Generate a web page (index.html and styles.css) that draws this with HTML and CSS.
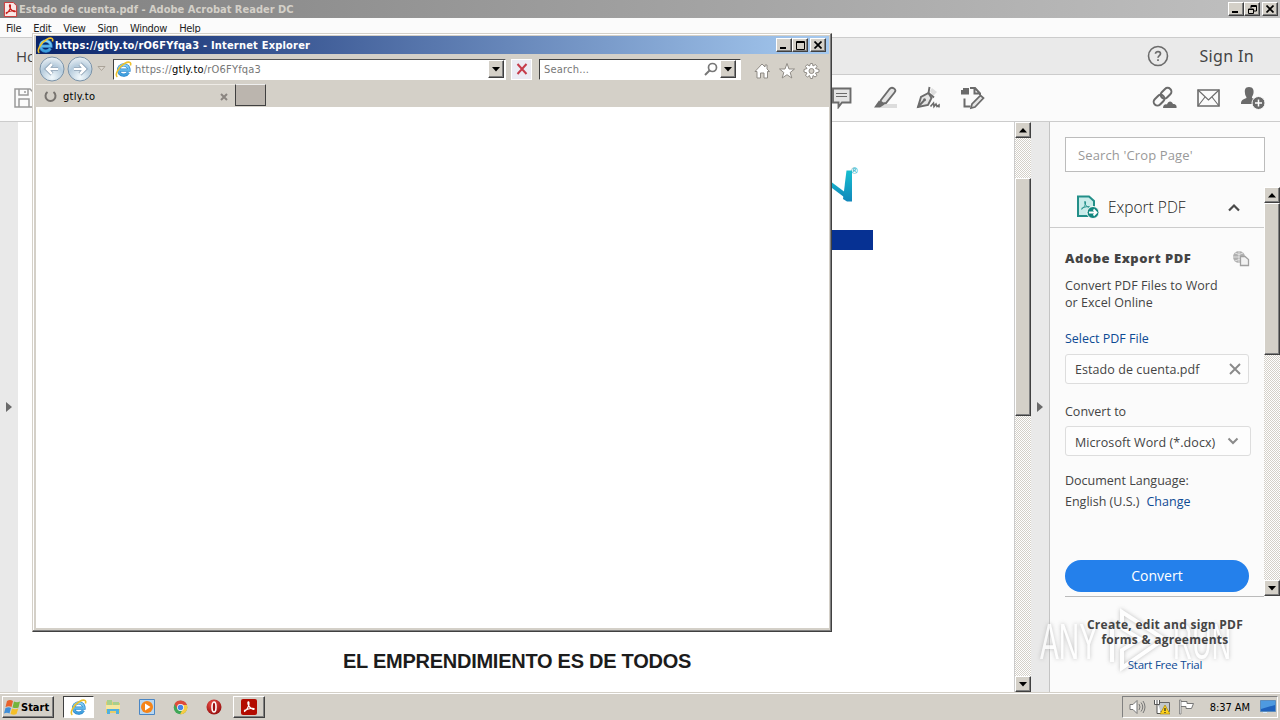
FILE: index.html
```html
<!DOCTYPE html>
<html lang="en">
<head>
<meta charset="utf-8">
<title>Estado de cuenta.pdf - Adobe Acrobat Reader DC</title>
<link rel="stylesheet" href="styles.css">
</head>
<body>
<svg width="0" height="0" class="defs">
  <defs>
    <linearGradient id="ieg" x1="0" y1="0" x2="0" y2="1"><stop offset="0" stop-color="#8ad4f8"/><stop offset="1" stop-color="#3a9cdc"/></linearGradient>
    <linearGradient id="ng" x1="0" y1="0" x2="0" y2="1"><stop offset="0" stop-color="#16bfd0"/><stop offset="1" stop-color="#1287bb"/></linearGradient>
    <radialGradient id="orb" cx=".5" cy=".85" r=".9"><stop offset="0" stop-color="#f2f9fc"/><stop offset=".55" stop-color="#b5cbdc"/><stop offset="1" stop-color="#f5f8fa"/></radialGradient>
    <radialGradient id="red" cx=".4" cy=".3" r=".8"><stop offset="0" stop-color="#f05048"/><stop offset="1" stop-color="#8c0808"/></radialGradient>
  </defs>
  <symbol id="ie" viewBox="0 0 16 16">
    <path d="M12.600 10.800A5 4.800 0 1 1 13.200 8.600H4.200" fill="none" stroke="#2c86cc" stroke-width="3"/>
    <path d="M12.600 10.800A5 4.800 0 1 1 13.200 8.600H4.200" fill="none" stroke="url(#ieg)" stroke-width="1.900"/>
    <path d="M2.200 15C-.6 13 3.500 5.200 9 2.300 12.500.4 15.800.4 14.500 4.200" fill="none" stroke="#ecc02c" stroke-width="1.500"/>
  </symbol>
  <symbol id="pdf" viewBox="0 0 16 16">
    <path d="M3 12.800C4.800 12.200 8.800 7 8 3.600 7.500 2 6.500 3 7 5c.7 3 4.500 6 6 5.200C14 9 10 8.500 3 11.500" fill="none" stroke="currentColor" stroke-width="1.200"/>
  </symbol>
  <symbol id="up" viewBox="0 0 8 5"><path d="M4 0 8 4.500H0z"/></symbol>
  <symbol id="down" viewBox="0 0 8 5"><path d="M0 0H8L4 4.500z"/></symbol>
  <symbol id="close" viewBox="0 0 8 8"><path d="M.5.500 7.500 7.500M7.500.500.500 7.500" stroke="#000" stroke-width="1.700"/></symbol>
</svg>

<div class="app">
  <header class="titlebar">
    <svg class="app-icon" viewBox="0 0 16 16"><path d="M1.500.5H11L14.500 4V15.500H1.500z" fill="#f9e8e6" stroke="#c33"/><g color="#c8201c"><use href="#pdf" width="16" height="16"/></g></svg>
    <span class="titlebar-text">Estado de cuenta.pdf - Adobe Acrobat Reader DC</span>
    <div class="win-buttons">
      <span class="btn3d"><svg width="8" height="8"><path d="M0 7H6" stroke="#000" stroke-width="2"/></svg></span>
      <span class="btn3d"><svg width="9" height="9"><path d="M3 3V.500H8.500V6H6M3 1.500H8.500M.500 4H5.500V8.500H.500zM.500 4.500H5.500" fill="none" stroke="#000"/></svg></span>
      <span class="btn3d gap"><svg width="8" height="8"><use href="#close"/></svg></span>
    </div>
  </header>

  <nav class="menubar"><span>File</span><span>Edit</span><span>View</span><span>Sign</span><span>Window</span><span>Help</span></nav>

  <div class="homebar">
    <span class="home">Home</span>
    <svg class="help" width="22" height="22" viewBox="0 0 22 22"><circle cx="11" cy="11" r="9.500" fill="none" stroke="#6b6b6b" stroke-width="1.600"/><path d="M8.500 8.800C8.500 6 13.500 6 13.500 8.800 13.500 10.600 11 10.600 11 12.800M11 14.300V16" fill="none" stroke="#6b6b6b" stroke-width="1.700"/></svg>
    <span class="signin">Sign In</span>
  </div>

  <div class="toolbar">
    <svg class="t-save" width="20" height="20" viewBox="0 0 20 20" fill="none" stroke="#9a9a9a" stroke-width="1.500"><path d="M1 1H16L19 4V19H1zM5 1V7H14V1M5 19V11H15V19M11 3V5"/></svg>
    <svg class="t-note" width="20" height="22" viewBox="0 0 20 22"><path d="M1 1.500H18.500V15.500H10L6.500 20V15.500H1z" fill="#e4e4e4" stroke="#6b6b6b" stroke-width="1.900"/><path d="M4 6.500H15M4 9.500H15" stroke="#6b6b6b"/></svg>
    <svg class="t-mark" width="24" height="24" viewBox="0 0 24 24"><path d="M9 18H23V22H6z" fill="#dcdcdc"/><path d="M7 14 15.500 3Q17.500 .8 20 2.500T20.500 6.500L12 17 9 17.500 6.500 15.500z" fill="#e4e4e4" stroke="#6b6b6b" stroke-width="1.900"/><path d="M5 14.500 10.500 18.500 6 21.500 0 21.500z" fill="#6b6b6b"/></svg>
    <svg class="t-sign" width="25" height="24" viewBox="0 0 25 24"><path d="M12.500 7 15.500 12 12 19 2 21 5 11z" fill="#e4e4e4" stroke="#6b6b6b" stroke-width="1.900"/><path d="M14 5 16 2 21 6 17 10z" fill="#dedede"/><path d="M2 21 8 14.500M13.500 1 12.500 7 18 11.500" stroke="#6b6b6b" stroke-width="1.900" fill="none"/><path d="M14.500 20.500 17.500 17 18 20.500 20 18 21 20.500 23 19V21.500" stroke="#6b6b6b" stroke-width="1.600" fill="none"/><circle cx="8.500" cy="13.800" r="1.500" fill="#6b6b6b"/></svg>
    <svg class="t-edit" width="26" height="24" viewBox="0 0 26 24"><path d="M10 2H15L20 7.500V9M14.500 2V7.500H20M4.500 12.500V20.500H10.500" fill="none" stroke="#6b6b6b" stroke-width="2"/><path d="M1 4H3V2H9V8.500H1z" fill="#6b6b6b"/><path d="M11 22 12 18 20.500 9.500 23.500 12 15 21z" fill="#e4e4e4" stroke="#6b6b6b" stroke-width="1.700"/></svg>
    <svg class="t-link" width="25" height="24" viewBox="0 0 25 24"><g fill="none" stroke="#6b6b6b" stroke-width="2"><rect x="8" y="3.500" width="12" height="7.500" rx="3.700" transform="rotate(-45 14 7.200)"/><rect x="1" y="10.500" width="12" height="7.500" rx="3.700" transform="rotate(-45 7 14.200)"/></g><path d="M11 22C11 18 14 18 15 18.500 16 14.500 20 14.500 21 18 24 18 25 20 24.500 22z" fill="#6b6b6b"/></svg>
    <svg class="t-mail" width="23" height="18" viewBox="0 0 23 18" fill="none" stroke="#6b6b6b" stroke-width="1.600"><path d="M1 1H22V17H1z"/><path d="M1 1 11.500 11 22 1M1 17 8 8M22 17 15 8" stroke-width="1.100"/></svg>
    <svg class="t-user" width="25" height="24" viewBox="0 0 25 24"><path d="M9 1C13 1 14 4 13.500 7 13 10 12 10 12 12L16 14V18H1C1 14 3 13.500 6.500 12 6.500 10 5 10 5 7 4.500 4 5 1 9 1" fill="#6b6b6b"/><circle cx="18.500" cy="17" r="6.500" fill="#6b6b6b" stroke="#fbfbfb"/><path d="M18.500 13.500V20.500M15 17H22" stroke="#fff" stroke-width="1.500"/></svg>
  </div>

  <main class="workspace">
    <div class="rail left"><svg width="6" height="10"><path d="M0 0 6 5 0 10z" fill="#6a6a6a"/></svg></div>
    <section class="document">
      <svg class="logo" width="62" height="40" viewBox="0 0 62 40"><path d="M20 12 48 33" fill="none" stroke="url(#ng)" stroke-width="4.500"/><path d="M45.500 5.500H51V36.500H46L42 34z" fill="url(#ng)"/><text x="50" y="9" class="reg">®</text></svg>
      <div class="banner"></div>
      <h1>EL EMPRENDIMIENTO ES DE TODOS</h1>
    </section>
    <div class="scrollbar doc-scroll">
      <span class="btn3d"><svg width="8" height="5"><use href="#up"/></svg></span>
      <span class="thumb"></span>
      <span class="btn3d end"><svg width="8" height="5"><use href="#down"/></svg></span>
    </div>
    <div class="rail right"><svg width="6" height="10"><path d="M0 0 6 5 0 10z" fill="#6a6a6a"/></svg></div>
    <aside class="panel">
      <div class="search">Search 'Crop Page'</div>
      <div class="panel-mid">
        <div class="panel-body">
          <div class="export-head">
            <svg width="24" height="25" viewBox="0 0 24 25"><path d="M2 1.500H13L18 6V21H2z" fill="#c9ecea" stroke="#238f89" stroke-width="2"/><g color="#238f89"><use href="#pdf" x="3" y="4" width="13" height="13"/></g><circle cx="17" cy="17.500" r="6" fill="#13877f" stroke="#fbfbfb"/><path d="M13 17.500H20M17.500 14.500 20.500 17.500 17.500 20.500" stroke="#fff" stroke-width="1.800" fill="none"/></svg>
            <span class="export-text">Export PDF</span>
            <svg class="chev" width="14" height="9"><path d="M2 7.500 7 2.500 12 7.500" fill="none" stroke="#4a4a4a" stroke-width="2.200"/></svg>
          </div>
          <div class="export-body">
            <div class="ae-row"><b>Adobe Export PDF</b><svg width="18" height="17" viewBox="0 0 18 17"><circle cx="7" cy="7" r="6" fill="#b0b0b0"/><path d="M1 7H13M7 1V13M3 3Q7 6 11 3M3 11Q7 8 11 11" stroke="#eee" fill="none" stroke-width=".8"/><path d="M8.500 6.500H13L16.500 9.500V15.500H8.500z" fill="#f2f2f2" stroke="#a0a0a0" stroke-width="1.300"/></svg></div>
            <p class="desc"><span class="d1">Convert PDF Files to Word</span><br><span class="d2">or Excel Online</span></p>
            <div class="link sel">Select PDF File</div>
            <div class="field file"><span>Estado de cuenta.pdf</span><svg width="12" height="12"><path d="M1 1 11 11M11 1 1 11" stroke="#8a8a8a" stroke-width="1.900"/></svg></div>
            <div class="lbl">Convert to</div>
            <div class="field format"><span>Microsoft Word (*.docx)</span><svg width="12" height="8"><path d="M1.500 1.500 6 6 10.500 1.500" fill="none" stroke="#8a8a8a" stroke-width="2"/></svg></div>
            <div class="lang">Document Language:</div>
            <div class="lang2"><span>English (U.S.)</span><span class="link">Change</span></div>
            <div class="convert">Convert</div>
          </div>
        </div>
        <div class="scrollbar side-scroll">
          <span class="btn3d"><svg width="8" height="5"><use href="#up"/></svg></span>
          <span class="thumb"></span>
          <span class="btn3d end"><svg width="8" height="5"><use href="#down"/></svg></span>
        </div>
      </div>
      <div class="promo"><b class="p1">Create, edit and sign PDF</b><b class="p2">forms &amp; agreements</b><span class="link">Start Free Trial</span></div>
    </aside>
  </main>

  <footer class="taskbar">
    <div class="start"><svg width="17" height="17" viewBox="0 0 17 17"><path d="M3 2Q6 0 9 2L7.500 8Q5 6.500 1.500 8z" fill="#e8622c"/><path d="M10 2.500Q13 4 16 2.500L14.500 8.500Q12 9.500 8.500 8.500z" fill="#74b43c"/><path d="M1.500 9Q5 7.500 7 9L5.500 14.500Q3 13 0 14.500z" fill="#3f8ed8"/><path d="M8 9.500Q11 11 14.300 9.500L12.500 15Q10 16.500 6.500 15z" fill="#f4bf28"/></svg><b>Start</b></div>
    <div class="task active"><svg width="17" height="17"><use href="#ie"/></svg></div>
    <svg class="q1" width="16" height="16" viewBox="0 0 16 16"><path d="M1 3V14H15V4H8L7 2H2z" fill="#e9cd68"/><path d="M2 1H7V6H2zM8 3H14V8H8z" fill="#a9cf8c"/><path d="M1 6H15V10H1z" fill="#f5e7a0"/><path d="M2 15V10H14V15H11V12H5V15z" fill="#4fb0df"/></svg>
    <svg class="q2" width="16" height="16" viewBox="0 0 16 16"><path d="M.5.500H15.500V15.500H.500z" fill="#b8d7f1" stroke="#4a86c4"/><circle cx="8" cy="8" r="6" fill="#f58418"/><path d="M6 4.500 11.500 8 6 11.500z" fill="#fff"/></svg>
    <svg class="q3" width="15" height="15" viewBox="0 0 15 15"><circle cx="7.500" cy="7.500" r="6.800" fill="#3fa757"/><path d="M1.500 4A7 7 0 0 1 14 5H7.500L4.500 9z" fill="#de4b3c"/><path d="M14 5A7 7 0 0 1 7 14.300L10.500 8 9 5z" fill="#f7cb45"/><circle cx="7.500" cy="7.500" r="3.400" fill="#fff"/><circle cx="7.500" cy="7.500" r="2.700" fill="#4584e8"/></svg>
    <svg class="q4" width="16" height="16" viewBox="0 0 16 16"><circle cx="8" cy="8" r="7.500" fill="url(#red)"/><ellipse cx="8" cy="8" rx="2" ry="5" fill="#a01010" stroke="#fff" stroke-width="1.600"/></svg>
    <div class="task"><svg width="16" height="16" viewBox="0 0 16 16"><rect width="16" height="16" rx="2" fill="#b30b00"/><g color="#fff"><use href="#pdf" width="16" height="16"/></g></svg></div>
    <div class="tray">
      <svg width="17" height="16" viewBox="0 0 17 16" fill="#fff" stroke="#777"><path d="M1 5.500H4L8 1.500V14.500L4 10.500H1z"/><path d="M10 5Q12 8 10 11M12 3.500Q15.500 8 12 12.500M14 2Q18 8 14 14" fill="none"/></svg>
      <svg width="16" height="16" viewBox="0 0 16 16"><path d="M4.500 3.500H15.500V12.500H4.500z" fill="#c3c8ca" stroke="#666"/><path d="M.500 1V5.500H5.500V1M3 1V14.500H7" fill="#fff" stroke="#555"/><path d="M11 6 16 15H6z" fill="#ffd21c" stroke="#9b7800" stroke-width=".6"/><path d="M11 9V12M11 13V14" stroke="#222" stroke-width="1.200"/></svg>
      <svg width="17" height="16" viewBox="0 0 17 16"><path d="M3 2.500H9V4.500H15.500L13.500 9.500H8V7.500H3" fill="#fff" stroke="#777"/><path d="M1.500 1H3V15H1.500z" fill="#fff" stroke="#777" stroke-width=".8"/></svg>
      <span class="clock">8:37 AM</span>
      <svg width="16" height="14" viewBox="0 0 16 14"><path d="M.5.500H15.500V11.500H.500z" fill="#1f62bd" stroke="#5d8dbc"/><path d="M1 1H15V5L1 9z" fill="#4e9ae0"/><path d="M3 12H7V13H3z" fill="#d9ecff"/></svg>
    </div>
  </footer>

  <svg class="watermark" width="204" height="72" viewBox="0 0 204 72"><text x="4" y="53" textLength="58" lengthAdjust="spacingAndGlyphs">ANY</text><path d="M76 16V56M86 6 128 33 86 62V44L104 33 86 22z"/><text x="137" y="53" textLength="58" lengthAdjust="spacingAndGlyphs">RUN</text></svg>

  <section class="browser">
    <div class="ie-title"><svg width="17" height="17"><use href="#ie"/></svg><b>https://gtly.to/rO6FYfqa3 - Internet Explorer</b>
      <div class="win-buttons">
        <span class="btn3d"><svg width="8" height="8"><path d="M0 7H6" stroke="#000" stroke-width="2"/></svg></span>
        <span class="btn3d"><svg width="9" height="9"><path d="M.500.500H8.500V8.500H.500zM0 1.500H9" fill="none" stroke="#000"/></svg></span>
        <span class="btn3d gap"><svg width="8" height="8"><use href="#close"/></svg></span>
      </div>
    </div>
    <div class="ie-nav">
      <svg class="orbs" width="54" height="26" viewBox="0 0 54 26"><g fill="url(#orb)" stroke="#7b93a8"><circle cx="13" cy="13" r="12"/><circle cx="41" cy="13" r="12"/></g><path d="M19 13H9M13 8 8 13 13 18M35 13H45M41 8 46 13 41 18" fill="none" stroke="#7d95ab" stroke-width="4"/><path d="M19 13H9M13 8 8 13 13 18M35 13H45M41 8 46 13 41 18" fill="none" stroke="#fff" stroke-width="2.600"/></svg>
      <svg class="tri" width="9" height="6"><path d="M1 .5H8L4.500 4.500z" fill="#ddd8d0" stroke="#aaa398"/></svg>
      <div class="address"><svg width="17" height="17"><use href="#ie"/></svg><span class="url">https://<i>gtly.to</i>/rO6FYfqa3</span><span class="btn3d drop"><svg width="8" height="5"><use href="#down"/></svg></span></div>
      <div class="stop"><svg width="12" height="12"><path d="M1.500 1 10.500 11M10.500 1 1.500 11" stroke="#c63c4c" stroke-width="2"/></svg></div>
      <div class="ie-search"><span>Search...</span><svg width="14" height="14"><circle cx="8.500" cy="5.500" r="4" fill="none" stroke="#777" stroke-width="1.700"/><path d="M5.500 8.500 1 13" stroke="#777" stroke-width="2"/></svg><span class="btn3d drop"><svg width="8" height="5"><use href="#down"/></svg></span></div>
      <svg class="cmds" width="66" height="18" viewBox="0 0 66 18" fill="#fff" stroke="#8f8b85"><path d="M1 9.500 8 2 11 5V3H13V7L15.500 9.500H13.500V16H10V11H6.500V16H3V9.500z"/><path d="M33 1.500 35 7H40.500L36.200 10.500 37.800 16 33 12.700 28.200 16 29.800 10.500 25.500 7H31z"/><path d="M56.500 1.500H58.500L59 4 61.500 2.500 63 4.500 61.500 6.500 65 7.500V10L61.500 11 63 13.500 61 15 59 13.500 58.500 16.500H56.500L55.500 13.500 53.500 15 51.500 13.500 53 11 50 10V7.500L53 6.500 51.500 4.500 53 2.500 55.500 4z"/><circle cx="57.500" cy="9" r="2.500" fill="#d4d0c8"/></svg>
    </div>
    <div class="tabs"><div class="tab"><svg width="13" height="13"><path d="M3.500 2A5 5 0 1 0 9.500 2" fill="none" stroke="#77736f" stroke-width="2"/></svg><span>gtly.to</span><svg class="tx" width="8" height="8"><path d="M1 1 7 7M7 1 1 7" stroke="#8a8580" stroke-width="2"/></svg></div><div class="newtab"></div></div>
    <div class="page"></div>
  </section>
</div>
</body>
</html>
```

FILE: styles.css
```css
* { box-sizing: border-box; }
body { margin: 0; width: 1280px; height: 720px; overflow: hidden; font-family: "Open Sans", sans-serif; color: #444; }
svg { display: block; flex: none; }
.defs { position: absolute; }
.app { position: relative; display: flex; flex-direction: column; width: 1280px; height: 720px; background: #fbfbfb; white-space: nowrap; }

.btn3d { display: flex; align-items: center; justify-content: center; width: 16px; height: 14px; flex: none; background: #d4d0c8; border: 1px solid; border-color: #fff #404040 #404040 #fff; box-shadow: inset -1px -1px #808080; }
.win-buttons { display: flex; margin-left: auto; }
.win-buttons .gap { margin-left: 2px; }

.titlebar { display: flex; align-items: center; height: 18px; flex: none; padding: 0 2px 0 3px; background: linear-gradient(90deg, #808080, #c0c0c0); }
.app-icon { width: 15px; height: 15px; }
.titlebar-text { margin-left: 1px; font: bold 11px "DejaVu Sans Condensed", sans-serif; color: #d4d0c8; }
.menubar { display: flex; gap: 12px; height: 20px; flex: none; padding: 4px 0 0 6px; border-bottom: 1px solid #ccc; font: 11px/14px "DejaVu Sans Condensed", sans-serif; letter-spacing: -.3px; color: #222; }
.homebar { display: flex; align-items: center; height: 37px; flex: none; background: #eaeaea; border-bottom: 1px solid #ccc; padding: 0 26px 0 16px; }
.home { font-size: 15px; }
.help { margin-left: auto; margin-right: 30px; }
.signin { font: 16px "Noto Sans", sans-serif; letter-spacing: .35px; }
.toolbar { display: flex; align-items: center; height: 47px; flex: none; border-bottom: 1px solid #ccc; padding: 0 15px 0 14px; }
.t-note { margin-left: 798px; }
.t-mark { margin-left: 22px; }
.t-sign { margin-left: 18px; }
.t-edit { margin-left: 19px; }
.t-link { margin-left: auto; }
.t-mail { margin-left: 20px; }
.t-user { margin-left: 20px; }

.workspace { display: flex; height: 570px; flex: none; }
.rail { display: flex; align-items: center; width: 18px; background: #e9e9e9; }
.rail.left { padding-left: 6px; }
.rail.right { padding-left: 6px; }
.document { width: 996px; padding-top: 43px; background: #fff; }
.logo { margin-left: 783px; }
.reg { font: bold 9px "Liberation Sans", sans-serif; fill: #25b1c8; }
.banner { width: 80px; height: 20px; margin: 25px 0 0 775px; background: #063193; }
h1 { margin: 399px 0 0 325px; font: bold 20px/24px "Liberation Sans", sans-serif; letter-spacing: -.26px; color: #1c1c1c; }
.scrollbar { display: flex; flex-direction: column; background: repeating-conic-gradient(#d4d0c8 0 25%, #fff 0 50%) 0 0 / 2px 2px; }
.scrollbar .btn3d { width: 100%; height: 16px; }
.scrollbar .end { margin-top: auto; }
.thumb { background: #d4d0c8; border: 1px solid; border-color: #fff #404040 #404040 #fff; box-shadow: inset -1px -1px #808080; }
.doc-scroll { width: 17px; border-left: 1px solid #ccc; }
.doc-scroll .thumb { height: 238px; margin-top: 40px; }

.panel { width: 231px; border-left: 1px solid #c4c4c4; background: #fbfbfb; }
.search { width: 200px; height: 35px; margin: 15px 0 0 15px; padding-left: 12px; border: 1px solid #bcbcbc; background: #fff; font: 13px/34px "Open Sans", sans-serif; letter-spacing: .13px; color: #999; }
.panel-mid { display: flex; height: 409px; margin-top: 15px; }
.panel-body { width: 214px; }
.export-head { display: flex; align-items: center; height: 41px; padding: 0 23px 0 26px; border-bottom: 1px solid #ccc; }
.export-text { margin-left: 8px; font-size: 15.500px; font-weight: 300; color: #222; }
.chev { margin-left: auto; }
.export-body { display: flex; flex-direction: column; height: 369px; margin-left: 15px; padding-top: 20px; border-bottom: 1px solid #bbb; font-size: 12.500px; line-height: 17px; }
.ae-row { display: flex; justify-content: space-between; align-items: center; height: 20px; padding-right: 14px; font: bold 13px "Noto Sans", sans-serif; letter-spacing: .52px; }
.desc { margin: 9px 0 0; letter-spacing: .05px; }
.link { color: #0d4a94; }
.sel { margin-top: 19px; }
.field { display: flex; align-items: center; justify-content: space-between; width: 184px; height: 30px; padding: 0 7px 0 9px; border: 1px solid #ddd; border-radius: 3px; background: #fdfdfd; letter-spacing: .07px; }
.file { margin-top: 7px; }
.lbl { margin-top: 19px; }
.format { width: 186px; margin-top: 6px; padding-right: 11px; }
.format span { padding-top: 2px; }
.lang { margin-top: 16px; }
.lang2 { display: flex; gap: 7px; margin-top: 4px; }
.convert { width: 184px; height: 32px; margin-top: 50px; border-radius: 16px; background: #2480eb; color: #fff; font-size: 14px; line-height: 31px; text-align: center; }
.side-scroll { width: 16px; }
.side-scroll .thumb { height: 152px; }
.promo { position: relative; z-index: 2; display: flex; flex-direction: column; align-items: center; padding-top: 21px; font-size: 12px; line-height: 15px; letter-spacing: .28px; }
.promo .link { margin-top: 10px; font-size: 11.500px; letter-spacing: -.25px; }
.watermark { position: absolute; left: 1036px; top: 606px; z-index: 1; opacity: .75; filter: drop-shadow(0 0 2px #aaa); }
.watermark text { font: 50px "Liberation Sans", sans-serif; fill: #fff; }
.watermark path { fill: none; stroke: #fff; stroke-width: 4; }

.taskbar { display: flex; align-items: center; height: 28px; padding: 1px 2px 0; background: #d4d0c8; border-top: 1px solid #d4d0c8; box-shadow: inset 0 1px #fff; }
.start { display: flex; align-items: center; gap: 0; width: 52px; height: 22px; padding-left: 1px; border: 1px solid; border-color: #fff #404040 #404040 #fff; box-shadow: inset -1px -1px #808080; font: bold 11px "DejaVu Sans Condensed", sans-serif; color: #000; }
.task { display: flex; align-items: center; justify-content: center; width: 32px; height: 22px; border: 1px solid; border-color: #fff #404040 #404040 #fff; box-shadow: inset -1px -1px #808080; }
.task.active { width: 31px; margin-left: 9px; border-color: #404040 #fff #fff #404040; background: #fff; box-shadow: none; }
.q1 { margin-left: 11px; }
.q2 { margin-left: 18px; }
.q3 { margin-left: 18px; }
.q4 { margin: 0 11px 0 18px; }
.tray { display: flex; align-items: center; width: 156px; height: 22px; margin-left: auto; padding: 0 1px 0 6px; gap: 8px; border: 1px solid; border-color: #808080 #fff #fff #808080; font: 11px "DejaVu Sans Condensed", sans-serif; color: #000; }
.clock { margin-left: auto; margin-right: 2px; letter-spacing: -.05px; }

.browser { position: absolute; z-index: 3; left: 32px; top: 33px; display: flex; flex-direction: column; width: 800px; height: 599px; padding: 2px 2px 3px 3px; background: #d4d0c8; border: 1px solid; border-color: #d4d0c8 #404040 #404040 #d4d0c8; box-shadow: inset -1px -1px #808080, inset 1px 1px #fff; }
.ie-title { display: flex; align-items: center; height: 18px; flex: none; padding: 0 3px 0 1px; background: linear-gradient(90deg, #0a246a, #a6caf0); font: bold 11px "DejaVu Sans Condensed", sans-serif; letter-spacing: .2px; color: #fff; }
.ie-title b { margin-left: 1px; }
.ie-nav { display: flex; align-items: center; height: 30px; flex: none; padding-left: 3px; font: 11px "DejaVu Sans Condensed", sans-serif; color: #777; }
.tri { margin-left: 4px; }
.address { display: flex; align-items: center; width: 393px; height: 21px; margin-left: 7px; padding: 0 1px 0 1px; background: #fff; border: 1px solid; border-color: #555 #fff #fff #404040; }
.url { margin-left: 3px; padding-top: 1px; letter-spacing: .2px; }
.url i { font-style: normal; color: #000; }
.drop { height: 18px; width: 16px; margin-left: auto; }
.stop { display: flex; align-items: center; justify-content: center; width: 21px; height: 21px; margin-left: 5px; background: #ebebf4; border: 1px solid #fff; }
.ie-search { display: flex; align-items: center; width: 202px; height: 21px; margin-left: 7px; padding: 0 4px; background: #fff; border: 1px solid; border-color: #404040 #fff #fff #404040; letter-spacing: .2px; }
.ie-search > span:first-child { padding-top: 1px; }
.ie-search > svg { margin-left: auto; }
.ie-search .drop { margin-left: 2px; }
.cmds { margin-left: 13px; margin-top: 4px; }
.tabs { display: flex; height: 23px; flex: none; }
.tab { display: flex; align-items: center; width: 199px; height: 23px; padding: 1px 7px 0 8px; border-top: 1px solid #eeebe6; font: 11px "DejaVu Sans Condensed", sans-serif; letter-spacing: .3px; color: #000; }
.tab span { margin-left: 6px; }
.tx { margin-left: auto; }
.newtab { width: 31px; height: 22px; background: #bbb5ae; border: 1px solid; border-color: #eee #404040 #404040 #404040; }
.page { flex: 1; background: #fff; }
```
